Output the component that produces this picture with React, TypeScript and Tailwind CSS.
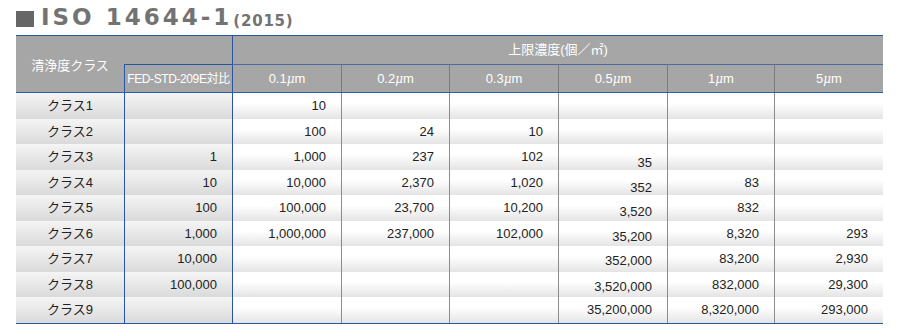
import React from "react";

const cols = "grid grid-cols-[108px_108px_109px_108px_109px_109px_107px_109px]";
const rowHeights = [26, 25, 26, 25, 26, 25, 26, 25, 26];

const sizes = ["0.1", "0.2", "0.3", "0.5", "1", "5"];
const sizeCols = ["col-start-3", "col-start-4", "col-start-5", "col-start-6", "col-start-7", "col-start-8"];

// [class label, FED-STD, 0.1, 0.2, 0.3, 0.5, 1, 5]
const rows: string[][] = [
  ["クラス1", "", "10", "", "", "", "", ""],
  ["クラス2", "", "100", "24", "10", "", "", ""],
  ["クラス3", "1", "1,000", "237", "102", "35", "", ""],
  ["クラス4", "10", "10,000", "2,370", "1,020", "352", "83", ""],
  ["クラス5", "100", "100,000", "23,700", "10,200", "3,520", "832", ""],
  ["クラス6", "1,000", "1,000,000", "237,000", "102,000", "35,200", "8,320", "293"],
  ["クラス7", "10,000", "", "", "", "352,000", "83,200", "2,930"],
  ["クラス8", "100,000", "", "", "", "3,520,000", "832,000", "29,300"],
  ["クラス9", "", "", "", "", "35,200,000", "8,320,000", "293,000"],
];

// the 0.5µm column sits a little low in the original artwork
const halfOffset = ["", "", "translate-y-[6px]", "translate-y-[5px]", "translate-y-[4px]", "translate-y-[3px]", "translate-y-[2px]", "translate-y-[2px]", ""];

const jp = "font-['Liberation_Sans','Noto_Sans_CJK_JP',sans-serif]";

function Micron({ n }: { n: string }) {
  return (
    <span>
      {n}
      <span className="italic font-['DejaVu_Serif',serif] text-[12px]">μ</span>m
    </span>
  );
}

export default function App() {
  return (
    <div className={`w-[900px] h-[336px] bg-white ${jp}`}>
      {/* Title */}
      <div className="flex items-end h-[35px] pl-4 pb-[6px] text-[#737373]">
        <span className="inline-block w-[18px] h-4 bg-[#666] mr-[7px] mb-[2px]" />
        <span className="font-['DejaVu_Sans',sans-serif] font-bold text-[23px] leading-none tracking-[3px]">
          ISO 14644-1
        </span>
        <span className="font-['DejaVu_Sans',sans-serif] font-bold text-[15px] leading-none ml-[1px] tracking-[0.8px]">
          (2015)
        </span>
      </div>

      <div className="ml-4 w-[867px]">
        {/* Header */}
        <div className={`${cols} grid-rows-[28px_28px] bg-[#a6a6a6] text-white text-[13px] border-t border-[#2856a3] border-b border-b-[#2c5ead]`}>
          <div className="col-start-1 row-start-1 row-span-2 flex items-center justify-center pt-[4px]">清浄度クラス</div>
          <div className="col-start-3 col-span-6 row-start-1 flex items-center justify-center border-l border-[#2856a3]">
            上限濃度(個／㎡)
          </div>
          <div className="col-start-2 row-start-2 flex items-center justify-center border-l border-t border-[#2856a3] text-[12px] tracking-[-0.4px]">
            FED-STD-209E対比
          </div>
          {sizes.map((s, i) => (
            <div
              key={s}
              className={`${sizeCols[i]} row-start-2 flex items-center justify-center border-t border-t-[#4a6aa0] border-l ${i === 0 ? "border-l-[#2856a3]" : "border-l-[#7b7b7b]"}`}
            >
              <Micron n={s} />
            </div>
          ))}
        </div>

        {/* Body */}
        <div className="border-b border-[#2856a3] text-[13px] text-[#222]">
          {rows.map((r, ri) => (
            <div key={ri} className={cols} style={{ height: rowHeights[ri] }}>
              <div className="flex items-center justify-center bg-gradient-to-b from-[#f5f5f5] to-[#dadada]">{r[0]}</div>
              <div className="flex items-center justify-end pr-[15px] border-l border-[#2856a3] bg-gradient-to-b from-[#f5f5f5] to-[#dadada]">
                {r[1]}
              </div>
              {r.slice(2).map((v, ci) => (
                <div
                  key={ci}
                  className={`flex items-center justify-end pr-[15px] border-l bg-gradient-to-b from-white from-40% to-[#e4e4e4] ${ci === 0 ? "border-[#2856a3]" : "border-[#8c8c8c]"}`}
                >
                  <span className={ci === 3 ? halfOffset[ri] : ""}>{v}</span>
                </div>
              ))}
            </div>
          ))}
        </div>
      </div>
    </div>
  );
}
